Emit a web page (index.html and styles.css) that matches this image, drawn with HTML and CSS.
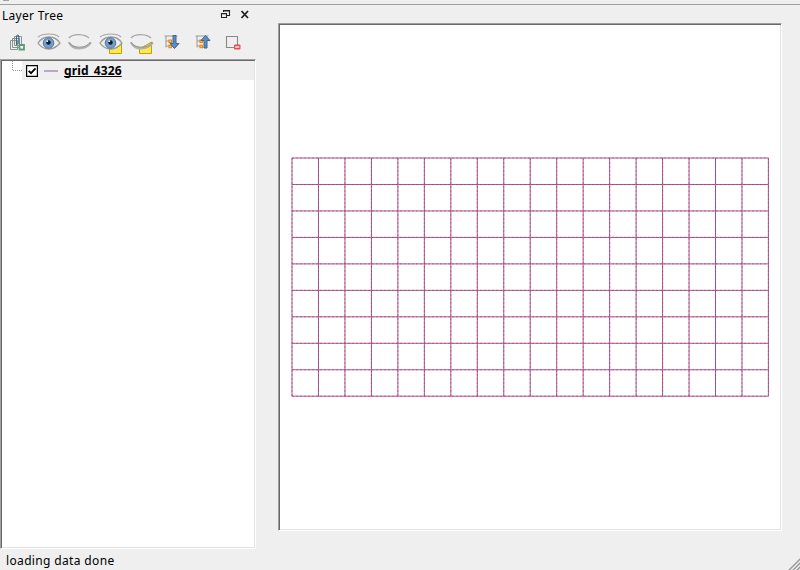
FILE: index.html
```
<!DOCTYPE html>
<html lang="en">
<head>
<meta charset="utf-8">
<title>Layer Tree</title>
<link rel="stylesheet" href="styles.css">
</head>
<body>
<svg class="defs" aria-hidden="true">
  <defs>
    <g id="lids">
      <path d="M1 6 Q4 2.4 11 2.6 Q18 3 21 6" stroke="#a5a7a3" stroke-width="1.3"/>
      <path d="M1 10.5 Q4 16.5 11 16.5 Q19 16.5 23 10.5" stroke="#b0b2ae" stroke-width="2"/>
      <path d="M.5 10 Q4 15.2 11.5 15.2 Q19 15.2 22.5 10" stroke="#8f918d" stroke-width="1"/>
    </g>
    <g id="eye">
      <path d="M1 11 Q5 5 12 5 Q19 5 23 11 Q18 17 12 17 Q5 17 1 11Z" fill="#eeeeec" stroke="#999b97" stroke-width="1.3"/>
      <path d="M1 5 Q5 2 12 2 Q19 2 22 5" stroke="#a5a7a3" stroke-width="1.2"/>
      <circle cx="11.5" cy="11" r="5.3" fill="#729fcf" stroke="#53789f" stroke-width="1"/>
      <circle cx="11.5" cy="10.5" r="2.2" fill="#111820"/>
      <circle cx="10.3" cy="9.2" r=".9" fill="#fff"/>
    </g>
    <g id="tree">
      <path d="M0 1.5H13 M1.5 1.5V13 M1.5 6.5H5 M1.5 11.5H5" stroke="#999b96" stroke-width="1"/>
      <path d="M4.5 5.5h2.4V8H4.5z M4.5 10.8h2.4v2.4H4.5z" fill="#fce94f" stroke="#f57900" stroke-width="1.1"/>
    </g>
  </defs>
</svg>
<div class="window">
  <div class="topbar"><i></i></div>
  <main>
    <section class="dock">
      <header>
        <h1>Layer Tree</h1>
        <svg width="32" height="12" viewBox="0 0 32 12">
          <path d="M3.5 3V1.5H9.5V6.5H7 M3 2H10" stroke="#222" stroke-width="1.1"/>
          <path d="M1.5 4.5H6.5V8.5H1.5Z M1 4.8H7" stroke="#222" stroke-width="1.1"/>
          <path d="M21.5 2L28 9 M28 2L21.5 9" stroke="#222" stroke-width="1.8"/>
        </svg>
      </header>
      <nav>
        <svg viewBox="0 0 24 24"><path d="M4.5 8.5H11.5V17.5H4.5Z M6.5 6.5H13.5V15.5H6.5Z M8.5 4.5H15.5V13.5H8.5Z" stroke="#8a9491"/><path d="M10.5 13V4.5Q11.8 1.5 12.8 4.5V12" stroke="#3e6687" stroke-width="1.1"/><path d="M13.5 13h4.5v4.5h-4.5z" fill="#fff" stroke="#5c9d79" stroke-width="1.8"/></svg>
        <svg viewBox="0 0 24 24"><use href="#eye"/></svg>
        <svg viewBox="0 0 24 24"><use href="#lids"/></svg>
        <svg viewBox="0 0 24 24"><path d="M10.5 10.5H22.5V21.5H10.5Z" fill="#fce94f" stroke="#c4a000"/><use href="#eye"/></svg>
        <svg viewBox="0 0 24 24"><path d="M9.5 17L21.5 10V21.5H9.5Z" fill="#fce94f" stroke="#c4a000"/><use href="#lids"/></svg>
        <svg viewBox="0 0 24 24"><use href="#tree" x="3.5" y="2.5"/><path d="M12 3.5H15V11.5H18L13.5 16.5L9 11.5H12Z" fill="#5c8dc4" stroke="#3c6590"/></svg>
        <svg viewBox="0 0 24 24"><use href="#tree" x="3.5" y="2.5"/><path d="M12 16H15V8.5H18L13.5 3.5L9 8.5H12Z" fill="#5c8dc4" stroke="#3c6590"/></svg>
        <svg viewBox="0 0 24 24"><path d="M3.5 4.5H14.5V15.5H3.5Z" stroke="#888a85" stroke-width="1.1"/><rect x="11" y="12.5" width="6.5" height="5" rx="1" fill="#ef4a50"/><path d="M12.2 15H16.3" stroke="#fff" stroke-width="1.3"/></svg>
      </nav>
      <div class="tree">
        <svg class="branch" width="20" height="19" viewBox="0 0 20 19"><path d="M10.5 0V9.5H20" stroke="#999" stroke-dasharray="1 1"/></svg>
        <div class="row">
          <svg width="12" height="12" viewBox="0 0 12 12"><path d="M.6.6H11.4V11.4H.6Z" fill="#fff" stroke="#000" stroke-width="1.2"/><path d="M2.7 5.8L5 8.2L9.5 3.3" stroke="#000" stroke-width="1.8"/></svg>
          <i></i>
          <span>grid_4326</span>
        </div>
      </div>
    </section>
    <section class="map">
      <svg width="500" height="504" viewBox="280 25 500 504">
        <defs>
          <path id="graticule" d="M292 158V396.3M318.47 158V396.3M344.94 158V396.3M371.41 158V396.3M397.88 158V396.3M424.35 158V396.3M450.82 158V396.3M477.29 158V396.3M503.76 158V396.3M530.23 158V396.3M556.7 158V396.3M583.17 158V396.3M609.64 158V396.3M636.11 158V396.3M662.58 158V396.3M689.05 158V396.3M715.52 158V396.3M741.99 158V396.3M768.4 158V396.3M292 158H768.4M292 184.47H768.4M292 210.94H768.4M292 237.41H768.4M292 263.88H768.4M292 290.35H768.4M292 316.82H768.4M292 343.29H768.4M292 369.76H768.4M292 396.2H768.4"/>
        </defs>
        <use href="#graticule" stroke="#b4508f" stroke-width="1"/>
        <use href="#graticule" stroke="#8a4a72" stroke-width="1" stroke-dasharray="2 2" opacity=".55"/>
      </svg>
    </section>
  </main>
  <footer>
    <span>loading data done</span>
    <svg width="12" height="12" viewBox="0 0 12 12"><path d="M0 13L13 0M4 13L13 4M8 13L13 8" stroke="#999" stroke-width="1.6"/><path d="M-1.5 13L13 -1.5M2.5 13L13 2.5M6.5 13L13 6.5" stroke="#fff" stroke-width=".7"/></svg>
  </footer>
</div>
</body>
</html>
```
FILE: styles.css
```
* { box-sizing: border-box; }
body { margin: 0; font: 12px/16px "Noto Sans", "Open Sans", sans-serif; color: #000; }
svg { display: block; fill: none; flex: none; }
.defs { position: absolute; width: 0; height: 0; }
.window { width: 800px; height: 570px; background: #efefef; display: flex; flex-direction: column; overflow: hidden; }
.topbar { height: 5px; border-bottom: 1px solid #a0a0a0; flex: none; }
.topbar i { display: block; width: 6px; height: 1px; margin-left: 3px; background: #a0a0a0; }
main { height: 544px; display: flex; gap: 22px; flex: none; }
.dock { width: 256px; display: flex; flex-direction: column; }
header { height: 22px; display: flex; justify-content: space-between; padding: 3px 4px 0 2px; }
header svg { margin-top: 1px; }
h1 { margin: 0; font-size: 12px; line-height: 16px; font-weight: 400; letter-spacing: .3px; }
nav { height: 32px; display: flex; gap: 7px; padding: 5px 0 0 6px; }
nav svg { width: 24px; height: 24px; }
.tree, .map { background: #fff; border: 1px solid; border-color: #a0a0a0 #fff #fff #a0a0a0; box-shadow: inset 1px 1px #696969, inset -1px -1px #e3e3e3; }
.tree { height: 490px; padding: 1px; display: flex; align-items: flex-start; }
.row { flex: 1; height: 19px; background: #efefef; display: flex; align-items: center; padding-left: 4px; }
.row i { width: 14px; height: 2px; margin: 0 6px; background: #b9a7c9; }
.row span { font-weight: 700; font-size: 12px; text-decoration: underline; text-decoration-skip-ink: none; text-underline-offset: 1px; letter-spacing: .13px; }
.map { width: 504px; height: 508px; margin-top: 18px; padding: 1px; }
footer { flex: 1; display: flex; justify-content: space-between; align-items: flex-end; padding-left: 6px; }
footer span { padding-bottom: 1px; letter-spacing: .35px; }
```
